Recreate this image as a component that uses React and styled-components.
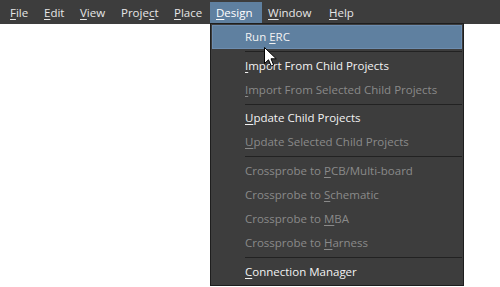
import React from "react";
import styled, { createGlobalStyle } from "styled-components";

const Global = createGlobalStyle`
  html, body { margin: 0; padding: 0; background: #ffffff; }
  body { font-family: "Open Sans", "Noto Sans", sans-serif; }
  #root { width: 500px; height: 287px; position: relative; overflow: hidden; }
`;

const Page = styled.div`
  position: relative;
  width: 500px;
  height: 287px;
  background: #ffffff;
  font-family: "Open Sans", "Noto Sans", sans-serif;
  font-size: 11.5px;
  -webkit-font-smoothing: antialiased;
`;

const MenuBar = styled.div`
  display: flex;
  align-items: stretch;
  height: 24px;
  box-sizing: border-box;
  padding: 2px 0 1px 4px;
  background: #3d3d3d;
`;

const BarItem = styled.div`
  display: flex;
  align-items: center;
  box-sizing: border-box;
  width: ${(p) => p.$w}px;
  padding: 0 0 1px 6px;
  color: ${(p) => (p.$active ? "#ffffff" : "#e6e6e6")};
  background: ${(p) => (p.$active ? "#5f80a0" : "transparent")};
  white-space: nowrap;
`;

const Key = styled.span`
  text-decoration: underline;
  text-underline-offset: 2px;
  text-decoration-thickness: 1px;
`;

const Dropdown = styled.div`
  position: absolute;
  top: 23px;
  left: 210px;
  width: 254px;
  box-sizing: border-box;
  border: 1px solid #1e1e1e;
  padding: 1px;
  background: #3d3d3d;
  display: flex;
  flex-direction: column;
`;

const Item = styled.div`
  height: 24px;
  box-sizing: border-box;
  display: flex;
  align-items: center;
  padding: 0 0 2px 32px;
  color: ${(p) => (p.$disabled ? "#8a8a8a" : "#f2f2f2")};
  background: ${(p) => (p.$hover ? "#5f80a0" : "transparent")};
  border: 1px solid ${(p) => (p.$hover ? "#6d8db0" : "transparent")};
  white-space: nowrap;
`;

const Separator = styled.div`
  height: ${(p) => p.$h || 5}px;
  display: flex;
  align-items: center;
  padding-left: 33px;
  &::after {
    content: "";
    flex: 1;
    height: 1px;
    background: #222222;
  }
`;

const Cursor = styled.svg`
  position: absolute;
  left: 264px;
  top: 47px;
  width: 13px;
  height: 20px;
  pointer-events: none;
`;

const L = ({ pre = "", k, post = "" }) => (
  <span>
    {pre}
    <Key>{k}</Key>
    {post}
  </span>
);

const barItems = [
  { pre: "", k: "F", post: "ile", w: 34 },
  { pre: "", k: "E", post: "dit", w: 36 },
  { pre: "", k: "V", post: "iew", w: 41 },
  { pre: "Proje", k: "c", post: "t", w: 53 },
  { pre: "", k: "P", post: "lace", w: 42 },
  { pre: "", k: "D", post: "esign", w: 52, active: true },
  { pre: "", k: "W", post: "indow", w: 61 },
  { pre: "", k: "H", post: "elp", w: 40 },
];

const menu = [
  { pre: "Run ", k: "E", post: "RC", hover: true },
  { sep: true, h: 5 },
  { pre: "", k: "I", post: "mport From Child Projects" },
  { pre: "", k: "I", post: "mport From Selected Child Projects", disabled: true },
  { sep: true, h: 4 },
  { pre: "", k: "U", post: "pdate Child Projects" },
  { pre: "", k: "U", post: "pdate Selected Child Projects", disabled: true },
  { sep: true, h: 5 },
  { pre: "Crossprobe to ", k: "P", post: "CB/Multi-board", disabled: true },
  { pre: "Crossprobe to ", k: "S", post: "chematic", disabled: true },
  { pre: "Crossprobe to ", k: "M", post: "BA", disabled: true },
  { pre: "Crossprobe to ", k: "H", post: "arness", disabled: true },
  { sep: true, h: 5 },
  { pre: "", k: "C", post: "onnection Manager" },
];

export default function App() {
  return (
    <Page>
      <Global />
      <MenuBar>
        {barItems.map((b, i) => (
          <BarItem key={i} $w={b.w} $active={b.active}>
            <L pre={b.pre} k={b.k} post={b.post} />
          </BarItem>
        ))}
      </MenuBar>
      <Dropdown>
        {menu.map((m, i) =>
          m.sep ? (
            <Separator key={i} $h={m.h} />
          ) : (
            <Item key={i} $hover={m.hover} $disabled={m.disabled}>
              <L pre={m.pre} k={m.k} post={m.post} />
            </Item>
          )
        )}
      </Dropdown>
      <Cursor viewBox="0 0 13 20">
        <path
          d="M0.5 0.5 L0.5 16.5 L4.5 12.8 L7.2 19 L9.6 18 L7 11.8 L12.3 11.8 Z"
          fill="#ffffff"
          stroke="#000000"
          strokeWidth="1"
          strokeLinejoin="miter"
        />
      </Cursor>
    </Page>
  );
}
